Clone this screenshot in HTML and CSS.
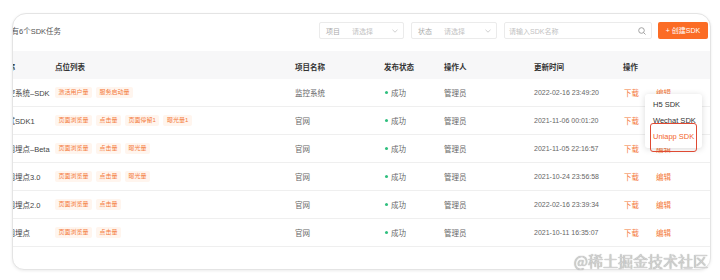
FILE: index.html
```html
<!DOCTYPE html>
<html lang="zh-CN">
<head>
<meta charset="utf-8">
<title>SDK任务</title>
<link rel="stylesheet" href="styles.css">
</head>
<body>
<div class="page">
  <div class="card">
    <div class="inner">
      <div class="toolbar">
        <div class="title">共有6个SDK任务</div>
        <div class="filters">
          <div class="select s1"><span class="lbl">项目</span><span class="ph">请选择</span><svg class="chev" width="6" height="4" viewBox="0 0 6 4"><path d="M0.5 0.8 L3 3.2 L5.5 0.8" fill="none" stroke="#c4c4c4" stroke-width="0.8"/></svg></div>
          <div class="select s2"><span class="lbl">状态</span><span class="ph">请选择</span><svg class="chev" width="6" height="4" viewBox="0 0 6 4"><path d="M0.5 0.8 L3 3.2 L5.5 0.8" fill="none" stroke="#c4c4c4" stroke-width="0.8"/></svg></div>
          <div class="search"><span class="ph">请输入SDK名称</span><svg class="mag" width="8" height="8" viewBox="0 0 8 8"><circle cx="3.5" cy="3.5" r="2.8" fill="none" stroke="#999" stroke-width="0.9"/><path d="M5.5 5.5 L7.5 7.5" stroke="#999" stroke-width="0.9"/></svg></div>
          <div class="btn">+ 创建SDK</div>
        </div>
      </div>
      <div class="table">
        <div class="row head">
          <div>名称</div><div>点位列表</div><div>项目名称</div><div>发布状态</div><div>操作人</div><div>更新时间</div><div>操作</div>
        </div>
        <div class="row">
          <div class="name">监控系统–SDK</div>
          <div class="tags"><span class="tag">激活用户量</span><span class="tag">服务启动量</span></div>
          <div>监控系统</div>
          <div class="status"><i class="dot"></i>成功</div>
          <div>管理员</div>
          <div class="time">2022-02-16 23:49:20</div>
          <div class="ops"><span>下载</span><span>编辑</span></div>
        </div>
        <div class="row">
          <div class="name">测试SDK1</div>
          <div class="tags"><span class="tag">页面浏览量</span><span class="tag">点击量</span><span class="tag">页面停留1</span><span class="tag">曝光量1</span></div>
          <div>官网</div>
          <div class="status"><i class="dot"></i>成功</div>
          <div>管理员</div>
          <div class="time">2021-11-06 00:01:20</div>
          <div class="ops"><span>下载</span><span>编辑</span></div>
        </div>
        <div class="row">
          <div class="name">官网埋点–Beta</div>
          <div class="tags"><span class="tag">页面浏览量</span><span class="tag">点击量</span><span class="tag">曝光量</span></div>
          <div>官网</div>
          <div class="status"><i class="dot"></i>成功</div>
          <div>管理员</div>
          <div class="time">2021-11-05 22:16:57</div>
          <div class="ops"><span>下载</span><span>编辑</span></div>
        </div>
        <div class="row">
          <div class="name">官网埋点3.0</div>
          <div class="tags"><span class="tag">页面浏览量</span><span class="tag">点击量</span><span class="tag">曝光量</span></div>
          <div>官网</div>
          <div class="status"><i class="dot"></i>成功</div>
          <div>管理员</div>
          <div class="time">2021-10-24 23:56:58</div>
          <div class="ops"><span>下载</span><span>编辑</span></div>
        </div>
        <div class="row">
          <div class="name">官网埋点2.0</div>
          <div class="tags"><span class="tag">页面浏览量</span><span class="tag">点击量</span></div>
          <div>官网</div>
          <div class="status"><i class="dot"></i>成功</div>
          <div>管理员</div>
          <div class="time">2022-02-16 23:39:34</div>
          <div class="ops"><span>下载</span><span>编辑</span></div>
        </div>
        <div class="row">
          <div class="name">官网埋点</div>
          <div class="tags"><span class="tag">页面浏览量</span><span class="tag">点击量</span></div>
          <div>官网</div>
          <div class="status"><i class="dot"></i>成功</div>
          <div>管理员</div>
          <div class="time">2021-10-11 16:35:07</div>
          <div class="ops"><span>下载</span><span>编辑</span></div>
        </div>
      </div>
    </div>
    <div class="menu">
      <div class="item">H5 SDK</div>
      <div class="item">Wechat SDK</div>
      <div class="item active">Uniapp SDK</div>
    </div>
    <div class="mark"></div>
  </div>
  <div class="watermark">@稀土掘金技术社区</div>
</div>
</body>
</html>
```

FILE: styles.css
```css
* { box-sizing: border-box; }
html, body { margin: 0; padding: 0; background: #fff; }
body {
  font-family: "Liberation Sans", "Noto Sans CJK SC", sans-serif;
  font-size: 7.5px;
  color: #555;
}
.page {
  position: relative;
  width: 720px;
  height: 280px;
  padding: 13px 9px 0 12px;
}
.card {
  position: relative;
  height: 257px;
  border: 1px solid #e4e4e4;
  border-radius: 14px 14px 12px 12px;
  box-shadow: 0 1px 3px rgba(0,0,0,0.08);
  background: #fff;
  overflow: hidden;
}
.inner {
  margin-left: -13px;
}
.toolbar {
  display: flex;
  align-items: center;
  justify-content: space-between;
  padding: 8px 2px 0 4px;
  height: 25px;
}
.title { color: #555; font-size: 7.5px; }
.filters { display: flex; align-items: center; gap: 7px; }
.select, .search {
  display: flex;
  align-items: center;
  height: 17px;
  border: 1px solid #ebebeb;
  border-radius: 2px;
  background: #fff;
  font-size: 7px;
}
.select { padding: 0 5px 0 6px; }
.s1 { width: 85px; }
.s2 { width: 86px; }
.select .lbl { color: #aaa; width: 26px; }
.ph { color: #c2c2c2; flex: 1; }
.search { width: 148px; padding: 0 5px 0 4px; margin-right: -1px; }
.btn {
  width: 50px;
  height: 17px;
  line-height: 17px;
  text-align: center;
  background: #fb6c25;
  color: #fff;
  border-radius: 2px;
  font-size: 7px;
}
.table { margin-top: 12px; }
.row {
  display: grid;
  grid-template-columns: 55px 240px 89px 60px 90px 89px 1fr;
  align-items: center;
  height: 28px;
  border-bottom: 1px solid #efefef;
  white-space: nowrap;
  color: #666;
}
.row.head {
  background: #f7f7f8;
  color: #333;
  font-weight: bold;
  border-bottom: none;
  padding-top: 2px;
}
.name { color: #444; }
.tags { display: flex; align-items: center; }
.tag {
  font-size: 6px;
  line-height: 11px;
  padding: 0 3.5px;
  margin-right: 4px;
  color: #f47a3a;
  background: #fff5ee;
  border-radius: 2px;
}
.status { display: flex; align-items: center; }
.dot {
  width: 3px; height: 3px;
  border-radius: 50%;
  background: #2fbf7e;
  margin: 0 3px 0 1px;
}
.time { color: #666; font-size: 7px; }
.ops { display: flex; gap: 17px; color: #f47a3a; padding-left: 1px; }
.menu {
  position: absolute;
  left: 632px;
  top: 80px;
  width: 57px;
  padding: 3px 0;
  background: #fff;
  border-radius: 3px;
  box-shadow: 0 1px 6px rgba(0,0,0,0.15);
}
.item {
  height: 16px;
  line-height: 16px;
  padding-left: 8px;
  color: #333;
  font-size: 7.5px;
  white-space: nowrap;
}
.item.active { color: #f3662c; }
.mark {
  position: absolute;
  left: 637px;
  top: 109px;
  width: 47px;
  height: 29px;
  border: 1.5px solid #df4a33;
  border-radius: 3px;
}
.watermark {
  position: absolute;
  right: 12px;
  bottom: 12px;
  font-family: "Noto Sans CJK SC", sans-serif;
  font-size: 15px;
  line-height: 15px;
  color: #d2d2d2;
  text-shadow: 0 0 1px #8a8a8a;
  white-space: nowrap;
}
```
